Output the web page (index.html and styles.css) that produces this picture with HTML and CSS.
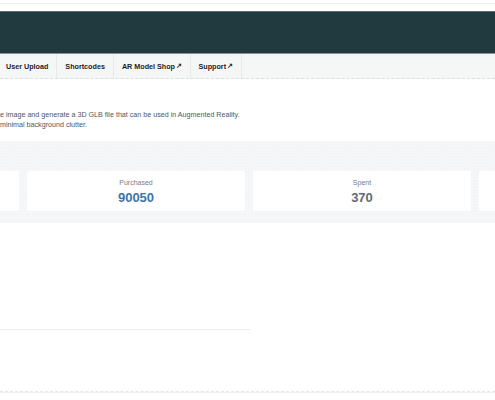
FILE: index.html
```html
<!DOCTYPE html>
<html lang="en">
<head>
<meta charset="utf-8">
<title>AR Model</title>
<link rel="stylesheet" href="styles.css">
</head>
<body>
<div class="page">
  <div class="strip"></div>
  <header class="hero"></header>
  <nav class="tabs">
    <a class="tab">User Upload</a>
    <a class="tab">Shortcodes</a>
    <a class="tab">AR Model Shop<sup>&#8599;</sup></a>
    <a class="tab">Support<sup>&#8599;</sup></a>
  </nav>
  <div class="intro">
    <p>e image and generate a 3D GLB file that can be used in Augmented Reality.</p>
    <p>minimal background clutter.</p>
  </div>
  <section class="stats">
    <div class="cards">
      <div class="card"></div>
      <div class="card"><div class="label">Purchased</div><div class="value blue">90050</div></div>
      <div class="card"><div class="label">Spent</div><div class="value gray">370</div></div>
      <div class="card"></div>
    </div>
  </section>
  <section class="workspace">
    <div class="divider"></div>
  </section>
  <footer class="foot"></footer>
</div>
</body>
</html>
```
FILE: styles.css
```css
html, body {
  margin: 0;
  padding: 0;
  background: #ffffff;
}
.page {
  font-family: "Liberation Sans", Arial, sans-serif;
  color: #3c434a;
  overflow: hidden;
  width: 495px;
  height: 400px;
}
.strip {
  margin-top: 3px;
  height: 7px;
  border-top: 1px solid #ededed;
}
.hero {
  height: 41px;
  background: #213a3f;
  border-top: 1px solid #5d6c6e;
  border-bottom: 1px solid #87928f;
}
.tabs {
  display: flex;
  height: 24px;
  background: #f5f6f6;
  border-bottom: 1px dashed #dcdddf;
}
.tab {
  display: flex;
  align-items: center;
  padding: 0 8px 0 6px;
  font-size: 7.2px;
  font-weight: bold;
  color: #1d2327;
  border-right: 1px solid #e8e9ea;
}
.tab + .tab {
  padding-left: 8px;
}
.tab sup {
  font-size: 6.5px;
  font-weight: bold;
  line-height: 0;
  vertical-align: 3px;
  margin-left: 0.5px;
}
.intro {
  margin-top: 31px;
  font-size: 7.15px;
  color: #50575e;
}
.intro p {
  margin: 0;
  line-height: 10px;
}
.stats {
  margin-top: 11px;
  background-color: #f3f5f7;
  background-image: radial-gradient(#fafbfc 0.6px, transparent 0.7px);
  background-size: 3px 3px;
  padding: 29px 0 12px;
  border-top: 1px solid #f6f7f8;
}
.cards {
  display: flex;
  gap: 8px;
  margin-left: -199px;
}
.card {
  flex: 0 0 218px;
  height: 40px;
  box-sizing: border-box;
  background: #ffffff;
  border-radius: 2px;
  padding-top: 7px;
  text-align: center;
}
.label {
  font-size: 7px;
  line-height: 9px;
  color: #787c82;
}
.value {
  margin-top: 3px;
  font-size: 13px;
  line-height: 15px;
  font-weight: bold;
}
.blue { color: #3b76aa; }
.gray { color: #646970; }
.workspace {
  height: 107px;
  display: flex;
  flex-direction: column;
  justify-content: flex-end;
}
.divider {
  width: 250px;
  height: 1px;
  background: #ececec;
}
.foot {
  margin-top: 61px;
  border-top: 1px dashed #e6e6e6;
  border-bottom: 1px solid #f0f0f0;
  height: 0;
}
```
